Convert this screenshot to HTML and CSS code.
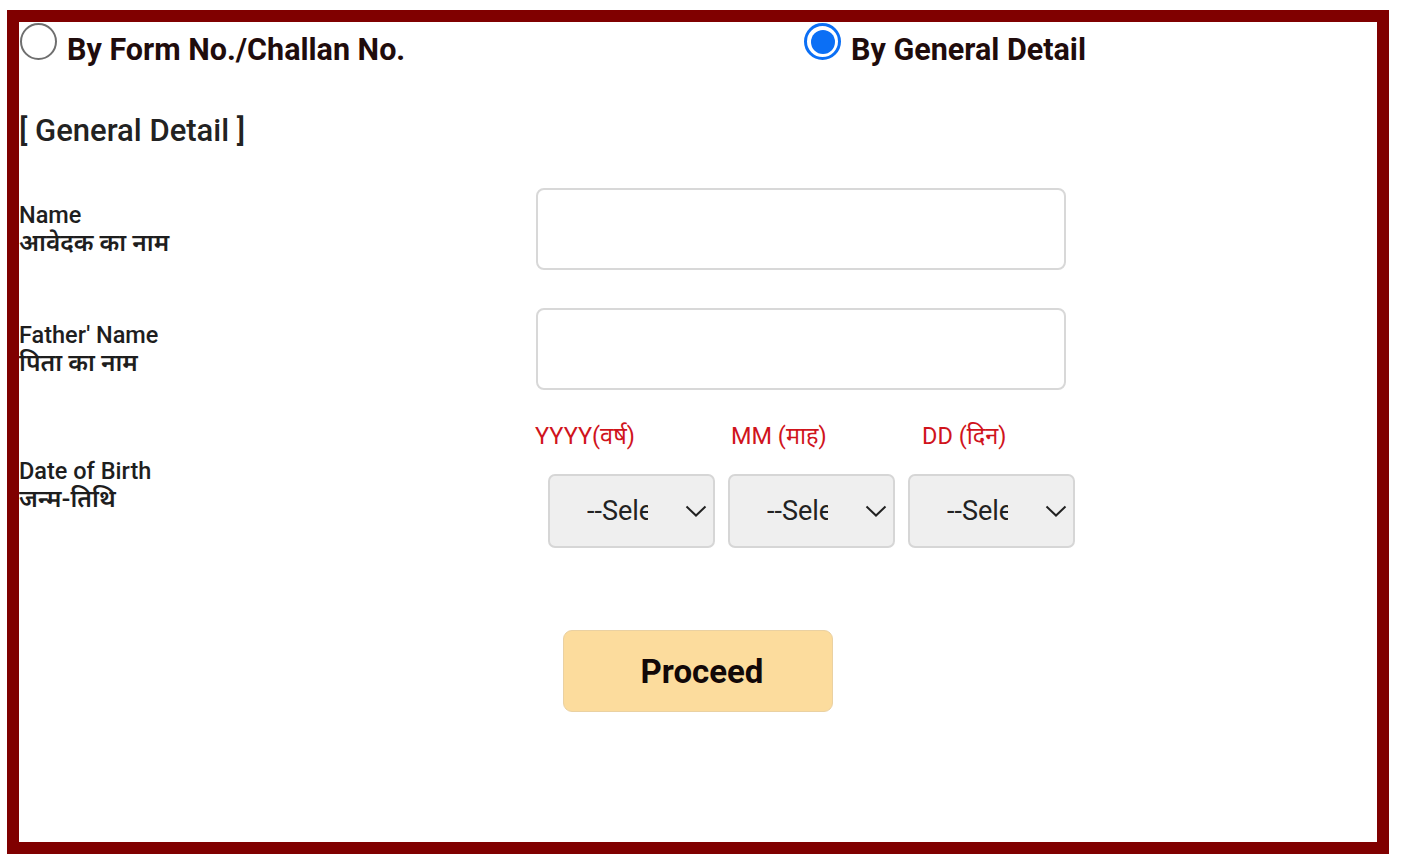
FILE: index.html
```html
<!DOCTYPE html>
<html lang="en">
<head>
<meta charset="utf-8">
<title>Search Application</title>
<link rel="stylesheet" href="styles.css">
</head>
<body>
<div class="frame">
  <div class="choices">
    <label class="choice">
      <span class="radio"></span>
      <span class="choice-text">By Form No./Challan No.</span>
    </label>
    <label class="choice">
      <span class="radio radio-on"><span class="radio-dot"></span></span>
      <span class="choice-text">By General Detail</span>
    </label>
  </div>

  <h2 class="section-title">[ General Detail ]</h2>

  <div class="form-row row-name">
    <div class="label">Name<br><span class="hi">आवेदक का नाम</span></div>
    <div class="field"><input class="text-input" type="text"></div>
  </div>

  <div class="form-row row-father">
    <div class="label">Father' Name<br><span class="hi">पिता का नाम</span></div>
    <div class="field"><input class="text-input" type="text"></div>
  </div>

  <div class="form-row row-dob">
    <div class="label">Date of Birth<br><span class="hi">जन्म-तिथि</span></div>
    <div class="field">
      <div class="date-labels">
        <span class="date-label dl-year">YYYY(वर्ष)</span>
        <span class="date-label dl-month">MM (माह)</span>
        <span class="date-label dl-day">DD (दिन)</span>
      </div>
      <div class="selects">
        <div class="select"><span class="select-text">--Select--</span><svg class="chev" viewBox="0 0 22 12" width="22" height="12"><path d="M1.5 1.5 L11 10.5 L20.5 1.5" fill="none" stroke="#222" stroke-width="2"/></svg></div>
        <div class="select"><span class="select-text">--Select--</span><svg class="chev" viewBox="0 0 22 12" width="22" height="12"><path d="M1.5 1.5 L11 10.5 L20.5 1.5" fill="none" stroke="#222" stroke-width="2"/></svg></div>
        <div class="select"><span class="select-text">--Select--</span><svg class="chev" viewBox="0 0 22 12" width="22" height="12"><path d="M1.5 1.5 L11 10.5 L20.5 1.5" fill="none" stroke="#222" stroke-width="2"/></svg></div>
      </div>
    </div>
  </div>

  <div class="actions">
    <button class="proceed" type="button">Proceed</button>
  </div>
</div>
</body>
</html>
```

FILE: styles.css
```css
html, body {
  margin: 0;
  padding: 0;
  background: #ffffff;
}

body {
  font-family: Roboto, "Noto Sans", "Noto Sans Devanagari", "Lohit Devanagari", FreeSans, sans-serif;
  color: #1e1e1e;
}

.frame {
  box-sizing: border-box;
  width: 1382px;
  height: 844px;
  margin: 10px 0 0 7px;
  border: 12px solid #800000;
  background: #ffffff;
}

.choices {
  display: grid;
  grid-template-columns: 784px 1fr;
}

.choice {
  display: flex;
  align-items: flex-start;
  gap: 10px;
}

.radio {
  box-sizing: border-box;
  width: 37px;
  height: 37px;
  border-radius: 50%;
  border: 2px solid #6f6f6f;
  margin-top: 1px;
  margin-left: 1px;
  display: flex;
  align-items: center;
  justify-content: center;
  background: #fff;
}

.radio-on {
  border: 3.5px solid #0b6ff5;
}

.radio-dot {
  width: 24px;
  height: 24px;
  border-radius: 50%;
  background: #0b6ff5;
}

.choice-text {
  font-weight: 700;
  font-size: 30.5px;
  line-height: 40px;
  margin-top: 8px;
  color: #1f0c0c;
}

.section-title {
  margin: 42px 0 0 0;
  font-weight: 500;
  font-size: 31px;
  line-height: 38px;
  color: #222;
}

.form-row {
  display: flex;
  align-items: center;
}

.row-name { margin-top: 38px; }
.row-father { margin-top: 38px; }
.row-dob { margin-top: 32px; }

.label {
  width: 517px;
  font-weight: 500;
  font-size: 23.5px;
  line-height: 28px;
  color: #1e1e1e;
}

.hi {
  font-size: 24.5px;
  font-weight: 600;
}

.field {
  width: 540px;
}

.text-input {
  box-sizing: border-box;
  display: block;
  width: 530px;
  height: 82px;
  border: 2px solid #d8d8d8;
  border-radius: 8px;
  background: #fff;
  outline: none;
  padding: 0 12px;
  font-size: 22px;
}

.date-labels {
  display: flex;
  font-size: 23.5px;
  line-height: 28px;
  color: #d0141c;
}

.date-label { display: block; }
.dl-year { width: 196px; margin-left: -1px; }
.dl-month { width: 191px; }

.selects {
  display: flex;
  gap: 13px;
  margin-top: 24px;
  margin-left: 12px;
}

.select {
  box-sizing: border-box;
  width: 167px;
  height: 74px;
  border: 2px solid #d6d6d6;
  border-radius: 7px;
  background: #efefef;
  display: flex;
  align-items: center;
  padding-left: 37px;
  padding-right: 6px;
}

.select-text {
  display: block;
  width: 61px;
  overflow: hidden;
  white-space: nowrap;
  font-size: 27px;
  line-height: 32px;
  color: #222;
}

.chev {
  display: block;
  margin-left: auto;
}

.actions {
  display: flex;
  justify-content: center;
  margin-top: 82px;
}

.proceed {
  box-sizing: border-box;
  width: 270px;
  height: 82px;
  border: 1.5px solid #ead1a2;
  border-radius: 9px;
  background: #fcdc9d;
  font-family: Roboto, "Noto Sans", sans-serif;
  font-weight: 700;
  font-size: 33px;
  color: #120808;
  padding: 0 0 0 8px;
  cursor: pointer;
}
```
